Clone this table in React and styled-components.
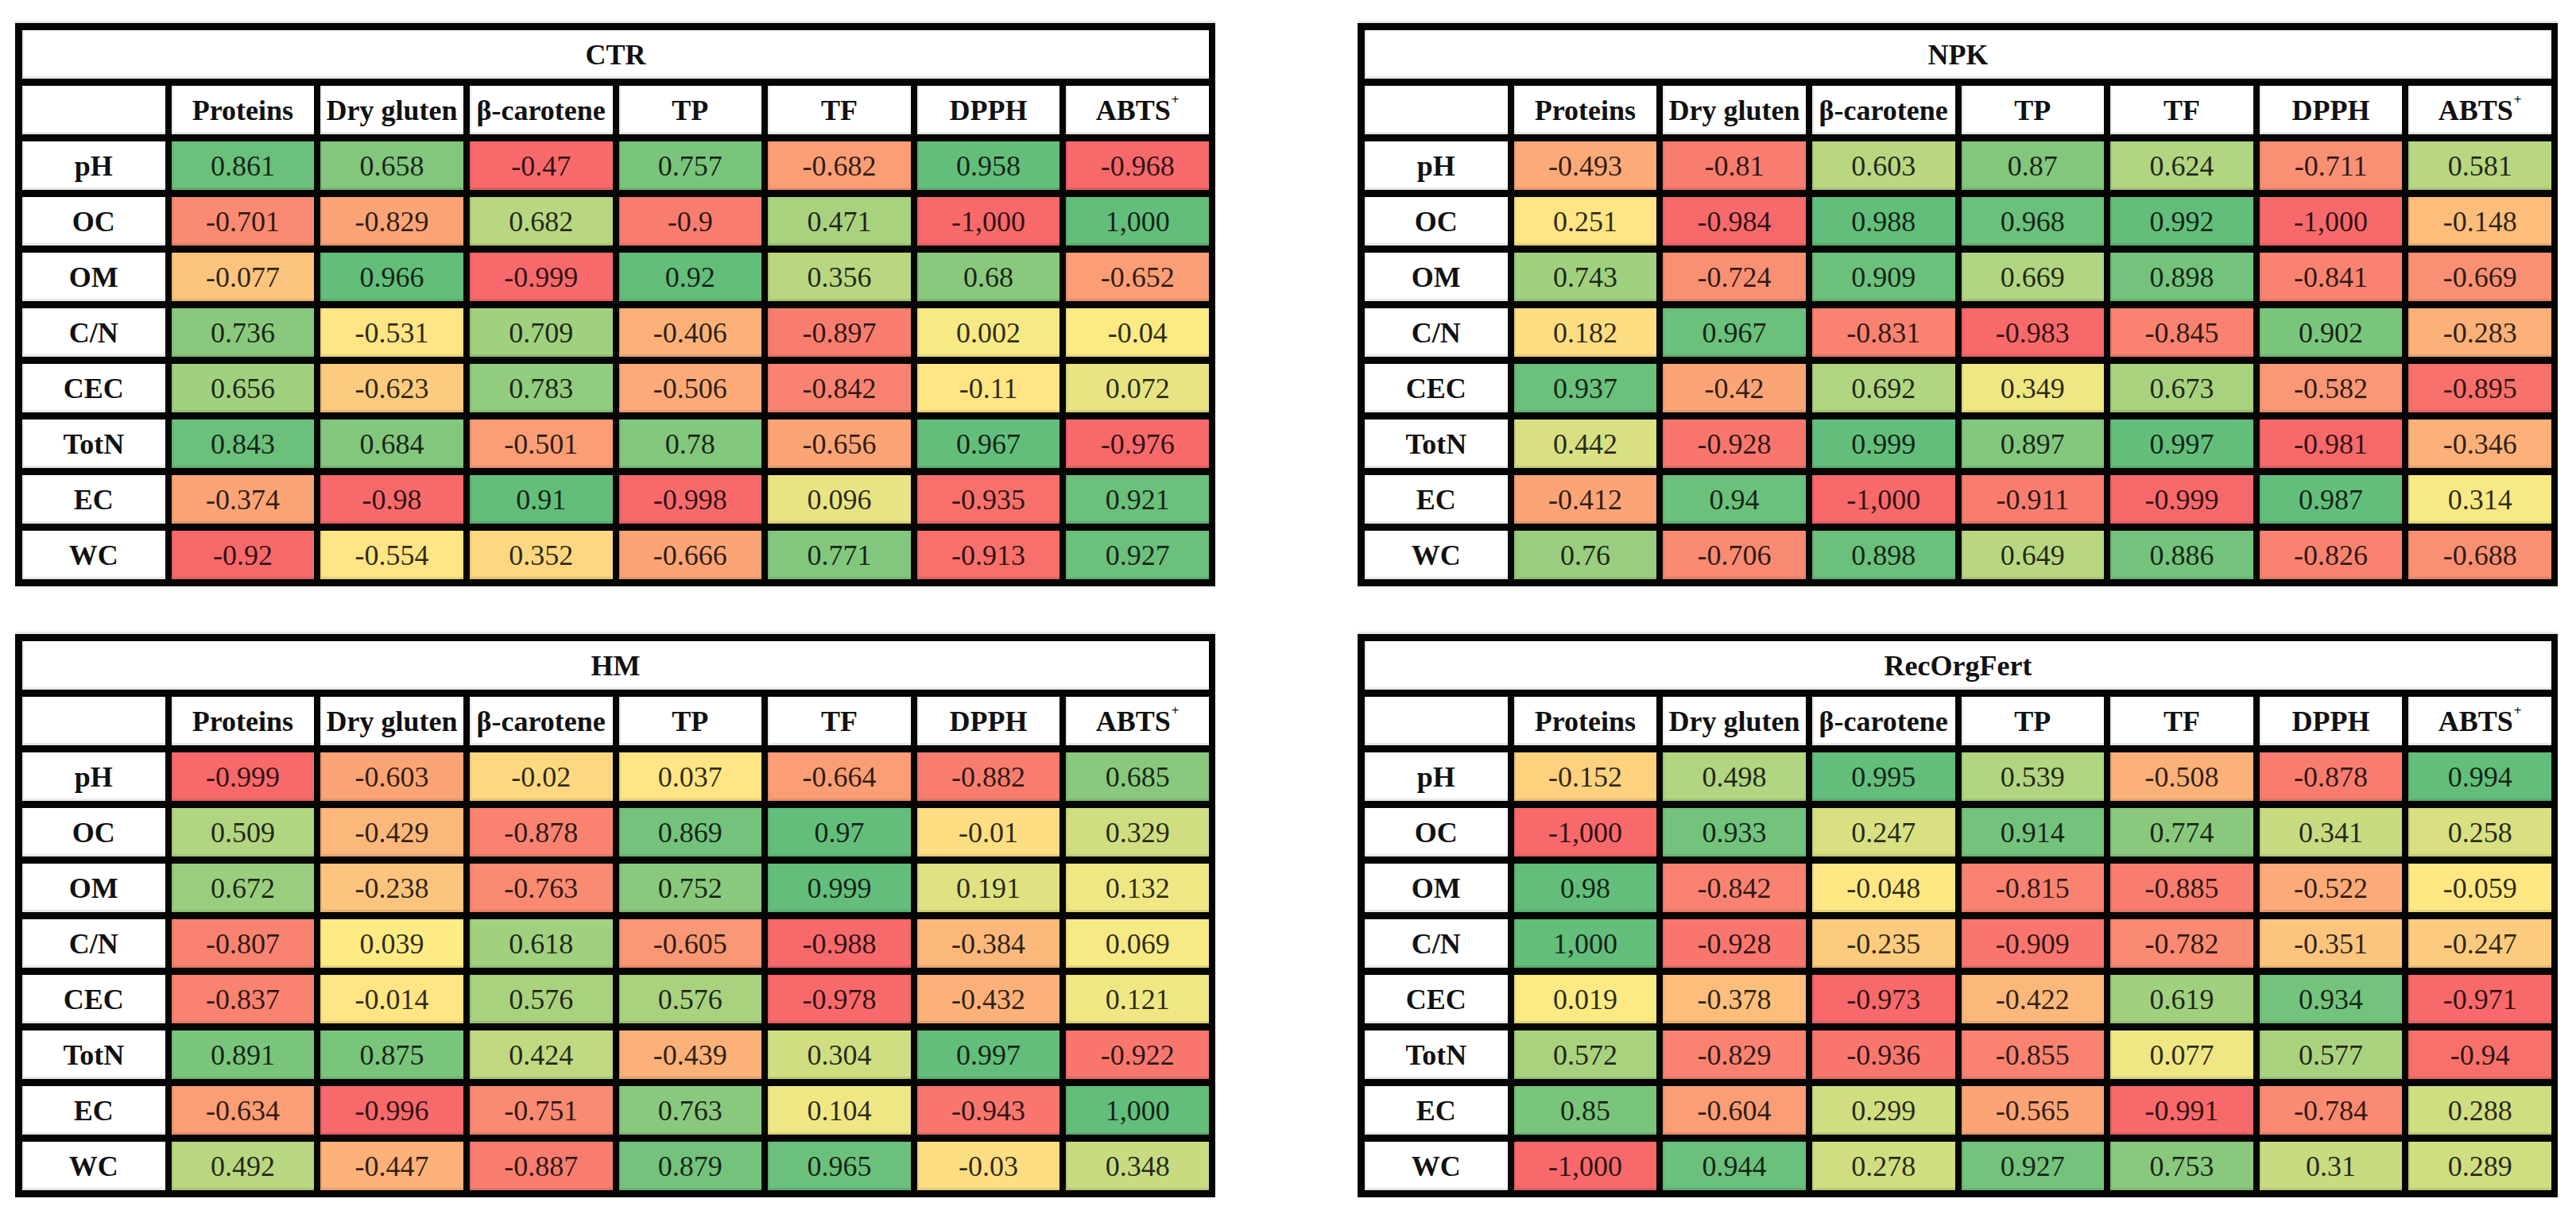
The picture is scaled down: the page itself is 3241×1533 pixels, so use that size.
import React from 'react'
import styled, { createGlobalStyle } from 'styled-components'

const GlobalStyle = createGlobalStyle`
  html, body {
    margin: 0;
    padding: 0;
    background: #ffffff;
  }
  body {
    font-family: 'Liberation Serif', 'Times New Roman', serif;
  }
`

// excel-like 3 colour scale: -1 red, 0 yellow, 1 green
const RED = [248, 105, 107]
const YELLOW = [255, 235, 132]
const GREEN = [99, 190, 123]

const mix = (a, b, t) => a.map((v, i) => Math.round(v + (b[i] - v) * t))

const tone = (level) => {
  const c = level < 0 ? mix(YELLOW, RED, -level) : mix(YELLOW, GREEN, level)
  return `rgb(${c.join(',')})`
}

const COLUMNS = ['Proteins', 'Dry gluten', 'β-carotene', 'TP', 'TF', 'DPPH']
const ROWS = ['pH', 'OC', 'OM', 'C/N', 'CEC', 'TotN', 'EC', 'WC']

// [value, colour level]
const TABLES = [
  {
    name: 'CTR',
    data: [
      [['0.861', 0.95], ['0.658', 0.8], ['-0.47', -1], ['0.757', 0.85], ['-0.682', -0.6], ['0.958', 1], ['-0.968', -1]],
      [['-0.701', -0.75], ['-0.829', -0.55], ['0.682', 0.45], ['-0.9', -0.85], ['0.471', 0.55], ['-1,000', -1], ['1,000', 1]],
      [['-0.077', -0.3], ['0.966', 1], ['-0.999', -1], ['0.92', 1], ['0.356', 0.45], ['0.68', 0.75], ['-0.652', -0.6]],
      [['0.736', 0.75], ['-0.531', -0.05], ['0.709', 0.6], ['-0.406', -0.45], ['-0.897', -0.85], ['0.002', 0.05], ['-0.04', 0.02]],
      [['0.656', 0.6], ['-0.623', -0.25], ['0.783', 0.7], ['-0.506', -0.5], ['-0.842', -0.8], ['-0.11', -0.05], ['0.072', 0.15]],
      [['0.843', 0.95], ['0.684', 0.8], ['-0.501', -0.6], ['0.78', 0.8], ['-0.656', -0.55], ['0.967', 1], ['-0.976', -1]],
      [['-0.374', -0.55], ['-0.98', -1], ['0.91', 1], ['-0.998', -1], ['0.096', 0.15], ['-0.935', -0.95], ['0.921', 0.95]],
      [['-0.92', -1], ['-0.554', -0.05], ['0.352', -0.15], ['-0.666', -0.55], ['0.771', 0.8], ['-0.913', -0.95], ['0.927', 0.95]],
    ],
  },
  {
    name: 'NPK',
    data: [
      [['-0.493', -0.5], ['-0.81', -0.85], ['0.603', 0.45], ['0.87', 0.8], ['0.624', 0.5], ['-0.711', -0.7], ['0.581', 0.45]],
      [['0.251', -0.05], ['-0.984', -1], ['0.988', 1], ['0.968', 0.95], ['0.992', 1], ['-1,000', -1], ['-0.148', -0.35]],
      [['0.743', 0.6], ['-0.724', -0.7], ['0.909', 0.95], ['0.669', 0.5], ['0.898', 0.9], ['-0.841', -0.8], ['-0.669', -0.7]],
      [['0.182', -0.1], ['0.967', 0.95], ['-0.831', -0.8], ['-0.983', -1], ['-0.845', -0.8], ['0.902', 0.85], ['-0.283', -0.45]],
      [['0.937', 0.95], ['-0.42', -0.55], ['0.692', 0.5], ['0.349', 0.1], ['0.673', 0.55], ['-0.582', -0.65], ['-0.895', -0.95]],
      [['0.442', 0.25], ['-0.928', -0.9], ['0.999', 1], ['0.897', 0.8], ['0.997', 1], ['-0.981', -1], ['-0.346', -0.45]],
      [['-0.412', -0.55], ['0.94', 0.95], ['-1,000', -1], ['-0.911', -0.85], ['-0.999', -1], ['0.987', 1], ['0.314', 0.05]],
      [['0.76', 0.65], ['-0.706', -0.75], ['0.898', 0.95], ['0.649', 0.45], ['0.886', 0.9], ['-0.826', -0.8], ['-0.688', -0.7]],
    ],
  },
  {
    name: 'HM',
    data: [
      [['-0.999', -1], ['-0.603', -0.55], ['-0.02', -0.15], ['0.037', -0.05], ['-0.664', -0.6], ['-0.882', -0.85], ['0.685', 0.75]],
      [['0.509', 0.5], ['-0.429', -0.4], ['-0.878', -0.8], ['0.869', 0.9], ['0.97', 1], ['-0.01', -0.1], ['0.329', 0.3]],
      [['0.672', 0.65], ['-0.238', -0.3], ['-0.763', -0.75], ['0.752', 0.75], ['0.999', 1], ['0.191', 0.2], ['0.132', 0.1]],
      [['-0.807', -0.8], ['0.039', 0], ['0.618', 0.6], ['-0.605', -0.65], ['-0.988', -1], ['-0.384', -0.4], ['0.069', 0.05]],
      [['-0.837', -0.8], ['-0.014', -0.05], ['0.576', 0.55], ['0.576', 0.55], ['-0.978', -1], ['-0.432', -0.45], ['0.121', 0.1]],
      [['0.891', 0.85], ['0.875', 0.85], ['0.424', 0.4], ['-0.439', -0.45], ['0.304', 0.3], ['0.997', 1], ['-0.922', -0.9]],
      [['-0.634', -0.6], ['-0.996', -1], ['-0.751', -0.75], ['0.763', 0.75], ['0.104', 0.1], ['-0.943', -0.9], ['1,000', 1]],
      [['0.492', 0.45], ['-0.447', -0.45], ['-0.887', -0.85], ['0.879', 0.9], ['0.965', 0.95], ['-0.03', -0.1], ['0.348', 0.35]],
    ],
  },
  {
    name: 'RecOrgFert',
    data: [
      [['-0.152', -0.2], ['0.498', 0.5], ['0.995', 1], ['0.539', 0.5], ['-0.508', -0.45], ['-0.878', -0.85], ['0.994', 1]],
      [['-1,000', -1], ['0.933', 0.9], ['0.247', 0.25], ['0.914', 0.9], ['0.774', 0.75], ['0.341', 0.35], ['0.258', 0.25]],
      [['0.98', 1], ['-0.842', -0.8], ['-0.048', -0.02], ['-0.815', -0.8], ['-0.885', -0.85], ['-0.522', -0.5], ['-0.059', -0.02]],
      [['1,000', 1], ['-0.928', -0.9], ['-0.235', -0.25], ['-0.909', -0.9], ['-0.782', -0.75], ['-0.351', -0.3], ['-0.247', -0.25]],
      [['0.019', 0.02], ['-0.378', -0.35], ['-0.973', -1], ['-0.422', -0.4], ['0.619', 0.6], ['0.934', 0.9], ['-0.971', -1]],
      [['0.572', 0.55], ['-0.829', -0.8], ['-0.936', -0.9], ['-0.855', -0.8], ['0.077', 0.1], ['0.577', 0.55], ['-0.94', -0.95]],
      [['0.85', 0.85], ['-0.604', -0.6], ['0.299', 0.3], ['-0.565', -0.55], ['-0.991', -1], ['-0.784', -0.75], ['0.288', 0.3]],
      [['-1,000', -1], ['0.944', 0.95], ['0.278', 0.3], ['0.927', 0.9], ['0.753', 0.75], ['0.31', 0.35], ['0.289', 0.3]],
    ],
  },
]

const Page = styled.div`
  width: 3241px;
  height: 1533px;
  box-sizing: border-box;
  padding: 29px 0 0 19px;
  display: grid;
  grid-template-columns: repeat(2, 1510px);
  grid-auto-rows: 709px;
  column-gap: 179px;
  row-gap: 60px;
  background: #ffffff;
  overflow: hidden;
`

const Table = styled.div`
  display: grid;
  grid-template-columns: repeat(8, 1fr);
  grid-template-rows: repeat(10, 61px);
  gap: 9px 8px;
  padding: 9px 8px 9px 9px;
  background: #050505;
  box-shadow: 0 -3px 0 #e8e8e8;
`

const Cell = styled.div`
  display: flex;
  align-items: center;
  justify-content: center;
  min-width: 0;
  background: ${(p) => p.$bg || '#ffffff'};
  box-shadow: inset 2px -3px 0 rgba(0, 0, 0, 0.09);
  font-family: 'Liberation Serif', serif;
  font-size: 36px;
  font-weight: 400;
  line-height: 1;
  color: #111111;
  white-space: nowrap;
  overflow: hidden;
`

const TitleCell = styled(Cell)`
  grid-column: 1 / -1;
  font-weight: 700;
`

const HeadCell = styled(Cell)`
  font-weight: 700;
`

const LabelCell = styled(Cell)`
  font-weight: 700;
`

const ValueCell = styled(Cell)`
  color: rgba(0, 0, 0, 0.82);
`

const Sup = styled.span`
  position: relative;
  top: -13px;
  font-size: 17px;
  line-height: 0;
  margin-left: 1px;
`

const CorrTable = ({ name, data }) => (
  <Table>
    <TitleCell>{name}</TitleCell>
    <HeadCell />
    {COLUMNS.map((c) => (
      <HeadCell key={c}>{c}</HeadCell>
    ))}
    <HeadCell>
      ABTS<Sup>+</Sup>
    </HeadCell>
    {ROWS.map((r, i) => (
      <React.Fragment key={r}>
        <LabelCell>{r}</LabelCell>
        {data[i].map(([v, level], j) => (
          <ValueCell key={j} $bg={tone(level)}>
            {v}
          </ValueCell>
        ))}
      </React.Fragment>
    ))}
  </Table>
)

export default function App() {
  return (
    <>
      <GlobalStyle />
      <Page>
        {TABLES.map((t) => (
          <CorrTable key={t.name} name={t.name} data={t.data} />
        ))}
      </Page>
    </>
  )
}
